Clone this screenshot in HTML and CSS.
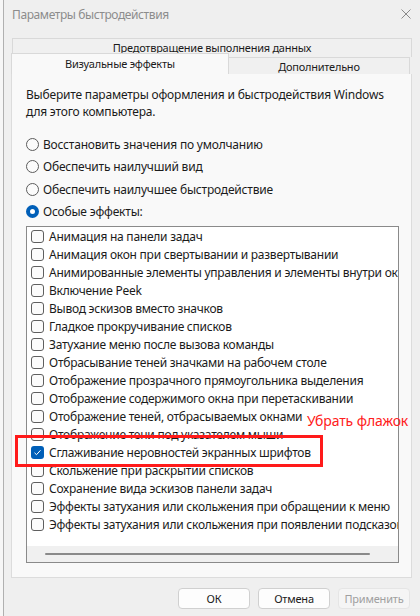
FILE: index.html
```html
<!doctype html>
<html>
    <head>
        <title>Параметры быстродействия</title>
        <meta charset="utf-8">
        <link rel="stylesheet" href="styles.css">
    </head>
    <body>
        <div class="window">
            <div class="titlebar">
                <span>Параметры быстродействия</span>
                <svg class="close" width="10" height="10" viewBox="0 0 10 10">
                    <path d="M0.5 0.5 L9.5 9.5 M9.5 0.5 L0.5 9.5" stroke="#8a8a8a" stroke-width="1" fill="none"/>
                </svg>
            </div>

            <div class="tabs">
                <div class="tab tab-top">Предотвращение выполнения данных</div>
                <div class="tab-row">
                    <div class="tab tab-active">Визуальные эффекты</div>
                    <div class="tab tab-other">Дополнительно</div>
                </div>
            </div>

            <div class="panel">
                <p class="intro">Выберите параметры оформления и быстродействия Windows для этого компьютера.</p>

                <div class="radios">
                    <div class="radio"><span class="dot"></span>Восстановить значения по умолчанию</div>
                    <div class="radio"><span class="dot"></span>Обеспечить наилучший вид</div>
                    <div class="radio"><span class="dot"></span>Обеспечить наилучшее быстродействие</div>
                    <div class="radio"><span class="dot on"></span>Особые эффекты:</div>
                </div>

                <div class="listbox">
                    <div class="items">
                        <div class="item"><span class="box"></span>Анимация на панели задач</div>
                        <div class="item"><span class="box"></span>Анимация окон при свертывании и развертывании</div>
                        <div class="item"><span class="box"></span>Анимированные элементы управления и элементы внутри окна</div>
                        <div class="item"><span class="box"></span>Включение Peek</div>
                        <div class="item"><span class="box"></span>Вывод эскизов вместо значков</div>
                        <div class="item"><span class="box"></span>Гладкое прокручивание списков</div>
                        <div class="item"><span class="box"></span>Затухание меню после вызова команды</div>
                        <div class="item"><span class="box"></span>Отбрасывание теней значками на рабочем столе</div>
                        <div class="item"><span class="box"></span>Отображение прозрачного прямоугольника выделения</div>
                        <div class="item"><span class="box"></span>Отображение содержимого окна при перетаскивании</div>
                        <div class="item"><span class="box"></span>Отображение теней, отбрасываемых окнами</div>
                        <div class="item"><span class="box"></span>Отображение тени под указателем мыши</div>
                        <div class="item"><span class="box checked">
                            <svg width="13" height="13" viewBox="0 0 13 13"><path d="M3.5 6.8 L5.5 8.7 L9.5 4.3" stroke="#fff" stroke-width="1" fill="none"/></svg>
                        </span>Сглаживание неровностей экранных шрифтов</div>
                        <div class="item"><span class="box"></span>Скольжение при раскрытии списков</div>
                        <div class="item"><span class="box"></span>Сохранение вида эскизов панели задач</div>
                        <div class="item"><span class="box"></span>Эффекты затухания или скольжения при обращении к меню</div>
                        <div class="item"><span class="box"></span>Эффекты затухания или скольжения при появлении подсказок</div>
                    </div>
                    <div class="hscroll"><div class="thumb"></div></div>
                </div>
            </div>

            <div class="buttons">
                <button class="btn">ОК</button>
                <button class="btn">Отмена</button>
                <button class="btn" disabled>Применить</button>
            </div>
        </div>

        <div class="mark"></div>
        <div class="note">Убрать флажок</div>
    </body>
</html>
```

FILE: styles.css
```css
body {
    margin: 0;
    background: #f6f6f6;
    font-family: 'Noto Sans', 'DejaVu Sans', sans-serif;
    font-size: 12px;
    letter-spacing: -0.2px;
    color: #1b1b1b;
}
.window {
    margin-left: 3px;
    border-left: 1px solid #b0b0b0;
    height: 616px;
    background: #efefef;
    display: flex;
    flex-direction: column;
}
.titlebar {
    height: 28px;
    display: flex;
    align-items: center;
    justify-content: space-between;
    padding: 0 9px 1px 8px;
    color: #8c8c8c;
    letter-spacing: -0.4px;
}
.tabs {
    margin: 9px 8px 0 7px;
    font-size: 11px;
    letter-spacing: -0.25px;
}
.tab {
    background: #f0f0f0;
    border: 1px solid #d9d9d9;
    border-bottom: none;
    text-align: center;
    box-sizing: border-box;
}
.tab-top {
    margin-left: 1px;
    height: 19px;
    line-height: 18px;
}
.tab-row {
    display: flex;
    align-items: flex-start;
    margin-top: -4px;
}
.tab-active {
    width: 218px;
    height: 21px;
    line-height: 20px;
    background: #f9f9f9;
    position: relative;
    z-index: 1;
}
.tab-other {
    width: 181px;
    height: 17px;
    margin-top: 4px;
    line-height: 18px;
    border-left: none;
}
.panel {
    margin: 0 8px 0 7px;
    height: 504px;
    box-sizing: border-box;
    background: #f9f9f9;
    border: 1px solid #dcdcdc;
    border-top: none;
    padding: 0 12px 14px 14px;
    display: flex;
    flex-direction: column;
}
.intro {
    margin: 12px 0 0 0;
    line-height: 17px;
}
.radios {
    margin-top: 13px;
}
.radio {
    height: 22.5px;
    display: flex;
    align-items: center;
}
.dot {
    width: 13px;
    height: 13px;
    box-sizing: border-box;
    border: 1px solid #5c5c5c;
    border-radius: 50%;
    margin-right: 4px;
    background: #fbfbfb;
}
.dot.on {
    border: 4px solid #005fb8;
    background: #fff;
}
.listbox {
    margin-top: 3px;
    flex: 1;
    background: #fff;
    border: 1px solid #8a8a8a;
    display: flex;
    flex-direction: column;
    overflow: hidden;
}
.items {
    flex: 1;
    overflow: hidden;
    letter-spacing: -0.25px;
}
.item {
    height: 18px;
    display: flex;
    align-items: center;
    white-space: nowrap;
}
.box {
    flex: none;
    width: 13px;
    height: 13px;
    box-sizing: border-box;
    border: 1px solid #5f5f5f;
    border-radius: 3px;
    margin: 0 5px 0 4px;
    background: #fbfbfb;
    display: flex;
}
.box.checked {
    border: none;
    background: #005fb8;
}
.hscroll {
    height: 16px;
    background: #f0f0f0;
    display: flex;
    align-items: center;
    padding: 0 28px 0 18px;
}
.thumb {
    flex: 1;
    height: 2px;
    border-radius: 1px;
    background: #8a8a8a;
}
.buttons {
    display: flex;
    justify-content: flex-end;
    gap: 8px;
    margin-top: 10px;
    padding-right: 10px;
}
.btn {
    width: 72px;
    height: 21px;
    font-family: inherit;
    font-size: 11px;
    letter-spacing: -0.2px;
    color: #1b1b1b;
    background: #fdfdfd;
    border: 1px solid #d0d0d0;
    border-radius: 4px;
    padding: 0;
}
.btn:disabled {
    color: #a0a0a0;
    background: #f5f5f5;
    border-color: #e5e5e5;
}
/* annotation drawn over the screenshot */
.mark {
    position: absolute;
    left: 15px;
    top: 435px;
    width: 308px;
    height: 32px;
    box-sizing: border-box;
    border: 3px solid #ff1a1a;
}
.note {
    position: absolute;
    left: 307px;
    top: 410px;
    color: #ff2020;
    font-size: 14px;
    letter-spacing: -0.1px;
    line-height: 22px;
}
```
